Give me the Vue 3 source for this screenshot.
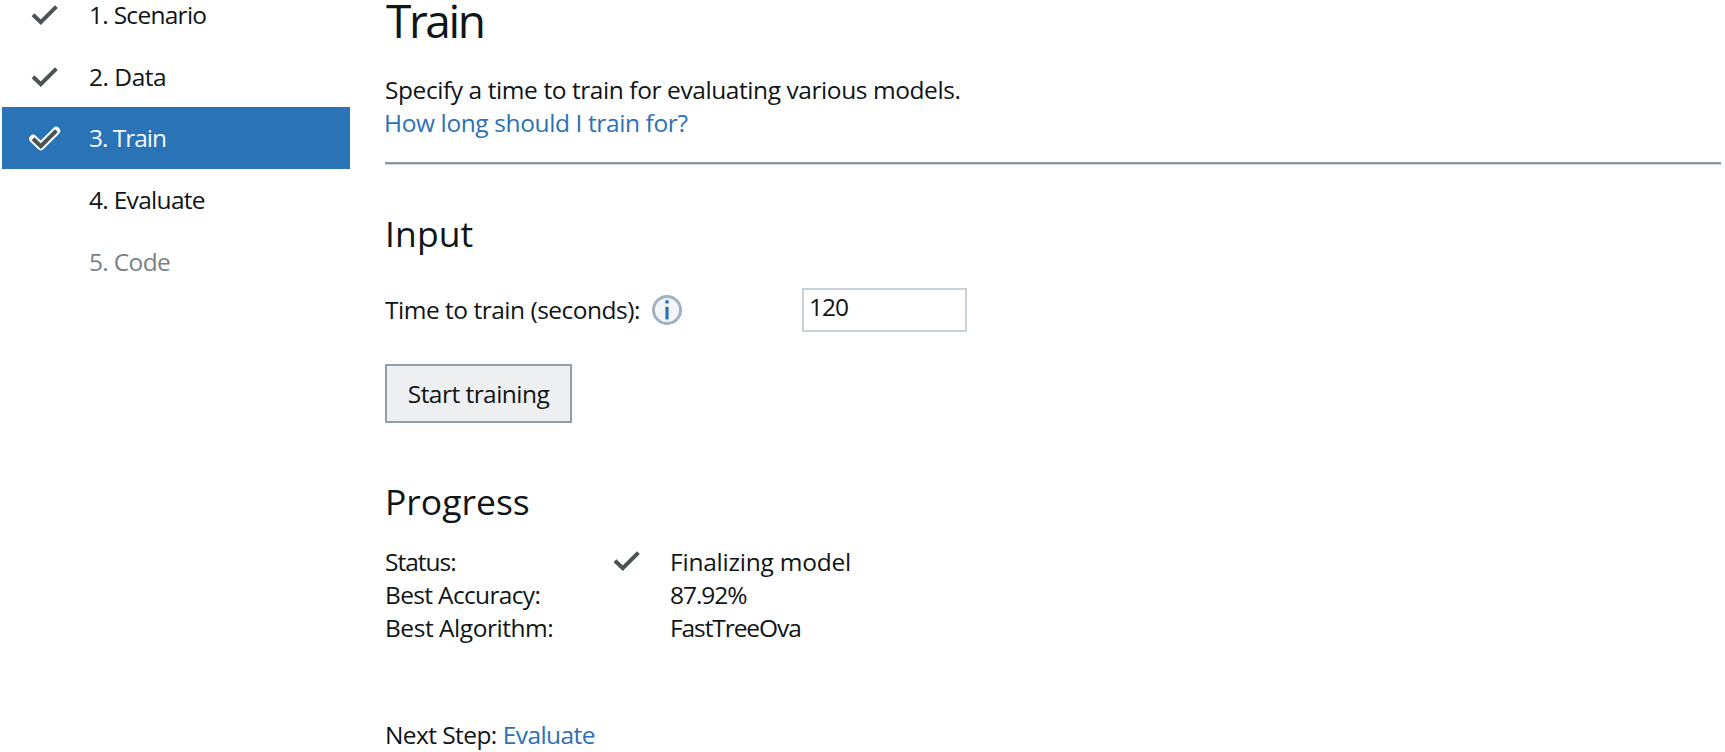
<script setup>
const steps = [
  { label: '1. Scenario', done: true, cls: 'scenario' },
  { label: '2. Data', done: true, cls: 'data' },
  { label: '3. Train', done: true, active: true, cls: 'train' },
  { label: '4. Evaluate', cls: 'evaluate' },
  { label: '5. Code', disabled: true, cls: 'code' }
]
const results = [
  { label: 'Status:', value: 'Finalizing model', done: true, cls: 'status' },
  { label: 'Best Accuracy:', value: '87.92%', cls: 'accuracy' },
  { label: 'Best Algorithm:', value: 'FastTreeOva', cls: 'algorithm' }
]
</script>

<template>
  <div class="page">
    <nav class="steps">
      <div
        v-for="s in steps"
        :key="s.label"
        class="step"
        :class="[s.cls, { active: s.active, disabled: s.disabled }]"
      >
        <span class="mark">
          <svg v-if="s.done" width="36" height="30" viewBox="0 0 36 30">
            <path v-if="s.active" d="M6.2 15.8 L13.8 23.2 L29.2 7.8" fill="none" stroke="#fff" stroke-width="8" stroke-linejoin="round" stroke-linecap="round" />
            <path d="M6 15.8 L13.8 23.2 L29.4 7.6" fill="none" stroke="#4b5354" stroke-width="4" />
          </svg>
        </span>
        <span>{{ s.label }}</span>
      </div>
    </nav>
    <main class="main">
      <h1>Train</h1>
      <p class="intro">Specify a time to train for evaluating various models.</p>
      <a class="help">How long should I train for?</a>
      <div class="rule"></div>
      <h2 class="input-title">Input</h2>
      <div class="field">
        <label class="time">Time to train (seconds):</label>
        <svg class="info" width="32" height="32" viewBox="0 0 32 32">
          <circle cx="16" cy="16" r="13.5" fill="#f2f4f6" stroke="#a3b5c2" stroke-width="3" />
          <circle cx="16" cy="16" r="14" fill="none" stroke="#5a8fbf" stroke-width="0.8" stroke-dasharray="1 3" />
          <path d="M16 6.2 V9.6 M16 12.7 V25.6" stroke="#2a73b7" stroke-width="3.2" />
        </svg>
        <div class="box">120</div>
      </div>
      <button class="start">Start training</button>
      <h2 class="progress-title">Progress</h2>
      <div v-for="r in results" :key="r.label" class="result" :class="r.cls">
        <span class="name">{{ r.label }}</span>
        <span class="state">
          <svg v-if="r.done" width="36" height="30" viewBox="0 0 36 30">
            <path d="M6 15.8 L13.8 23.2 L29.4 7.6" fill="none" stroke="#4b5354" stroke-width="4" />
          </svg>
        </span>
        <span class="value">{{ r.value }}</span>
      </div>
      <p class="next"><span>Next Step:</span><a>Evaluate</a></p>
    </main>
  </div>
</template>

<style>
body { margin: 0; background: #fff; overflow: hidden; }
</style>

<style scoped>
.page {
  display: flex;
  height: 752px;
  box-sizing: border-box;
  padding-left: 2px;
  font-family: "Open Sans", "Noto Sans", sans-serif;
  font-size: 24.5px;
  line-height: 33px;
  letter-spacing: -0.5px;
  color: #101516;
  white-space: nowrap;
}
.steps { width: 348px; flex: none; margin-top: -16.4px; }
.step { display: flex; align-items: center; height: 61.7px; }
.mark { width: 87px; box-sizing: border-box; padding-left: 25px; display: flex; }
.mark svg { display: block; }
.scenario { letter-spacing: -0.72px; }
.data { letter-spacing: -0.49px; }
.train { letter-spacing: -1.02px; }
.evaluate { letter-spacing: -0.7px; }
.code { letter-spacing: -0.66px; }
.active { background: #2a73b6; color: #f4f8fb; }
.disabled { color: #7a8286; }
.main { margin-left: 35px; width: 1336px; display: flex; flex-direction: column; align-items: flex-start; }
h1, h2, p { margin: 0; font-weight: 400; }
h1 { font-size: 46px; line-height: 41px; height: 40px; letter-spacing: -2.4px; margin-left: 1px; }
h2 { font-size: 35.5px; line-height: 41px; height: 40px; }
.intro { margin-top: 33px; letter-spacing: -0.42px; }
a { color: #2b72b5; }
.help { letter-spacing: -0.39px; margin-left: -1px; }
.rule { margin-top: 23px; width: 100%; height: 2px; background: #8d979e; border-bottom: 1px solid #cdd5da; }
.input-title { margin-top: 48px; letter-spacing: 0.1px; }
.field { display: flex; align-items: center; margin-top: 35px; height: 44px; }
.time { width: 266px; letter-spacing: -0.49px; margin-top: -1px; }
.info { display: block; }
.box {
  margin-left: 119px;
  width: 165px;
  height: 44px;
  box-sizing: border-box;
  border: 2px solid #c9d1da;
  padding: 0 0 0 5px;
  line-height: 33px;
  letter-spacing: -1px;
}
.start {
  margin-top: 32px;
  width: 187px;
  height: 59px;
  box-sizing: border-box;
  border: 2px solid #8f9ea8;
  background: #eeeff1;
  padding: 0;
  font: inherit;
  color: inherit;
  letter-spacing: -0.54px;
}
.progress-title { margin-top: 58px; margin-bottom: 24px; letter-spacing: 0; }
.result { display: flex; height: 33px; }
.name { width: 225px; }
.state { width: 60px; }
.state svg { display: block; margin-left: -1px; }
.status .name { letter-spacing: -1px; }
.status .value { letter-spacing: -0.22px; }
.accuracy .name { letter-spacing: -0.66px; }
.accuracy .value { letter-spacing: -1.05px; }
.algorithm .name { letter-spacing: -0.46px; }
.algorithm .value { letter-spacing: -1.08px; }
.next { display: flex; gap: 6px; margin-top: 74px; letter-spacing: -0.58px; }
</style>
